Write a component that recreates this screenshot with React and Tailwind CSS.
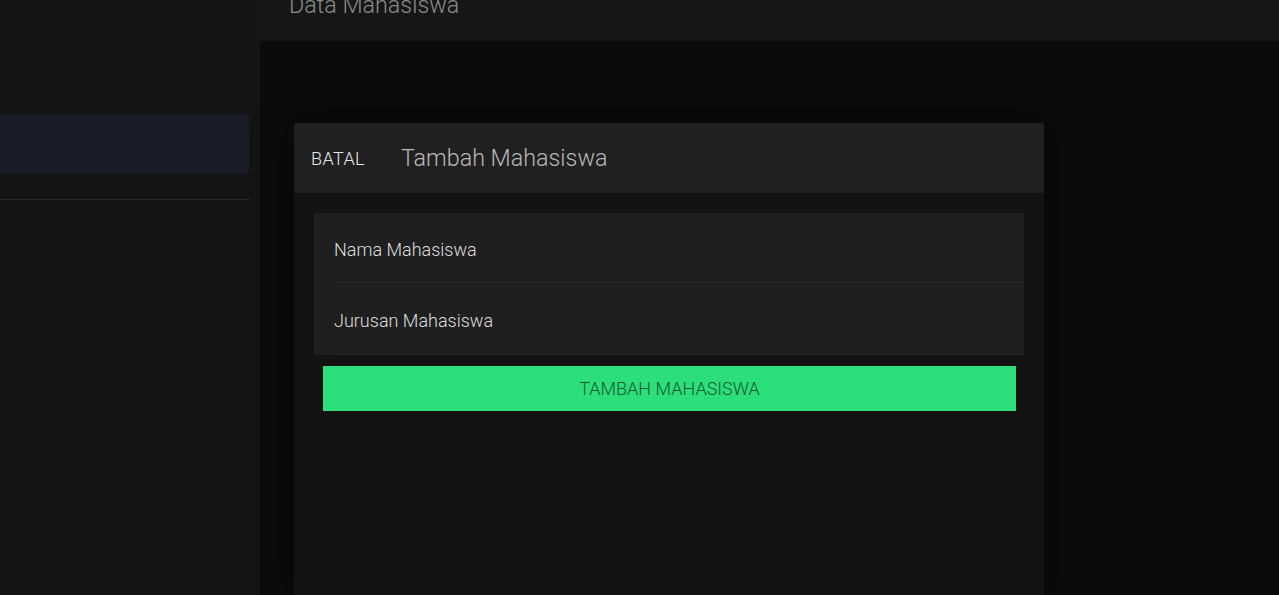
export default function App() {
  return (
    <div className="flex h-[595px] w-[1279px] overflow-hidden bg-[#0b0b0b] font-['Helvetica_Neue',Roboto,'Liberation_Sans',sans-serif] font-light">
      <aside className="w-[260px] shrink-0 bg-[#141414] pr-[11px] pt-[114px]">
        <div className="h-[60px] rounded-r-[4px] bg-[#181d27]" />
        <div className="mt-[25px] h-px bg-[#262626]" />
      </aside>

      <main className="flex flex-1 flex-col">
        <header className="h-[41px] shrink-0 overflow-hidden bg-[#161616] pl-[29px]">
          <h1 className="-mt-[6px] text-[23.3px] leading-none font-light text-[#8a8a8a]">Data Mahasiswa</h1>
        </header>

        <div className="flex-1 pl-[34px] pt-[82px]">
          <div className="h-full w-[750px] rounded-t-[3px] bg-[#121212] shadow-[0_0_40px_rgba(0,0,0,0.45)]">
            <div className="flex h-[70px] items-center gap-[36px] rounded-t-[3px] bg-[#202020] px-[17px]">
              <button className="text-[18px] tracking-[0.4px] font-light text-[#e8e8e8]">BATAL</button>
              <h2 className="text-[23.3px] font-light text-[#b8b8b8]">Tambah Mahasiswa</h2>
            </div>

            <div className="px-[20px] pt-[20px]">
              <div className="bg-[#1f1f1f]">
                <div className="pl-[20px]">
                  <input
                    placeholder="Nama Mahasiswa"
                    className="h-[70px] w-full border-b border-[#262626] bg-transparent pt-[4px] text-[18px] font-light text-[#dedede] outline-none placeholder:text-[#dedede]"
                  />
                </div>
                <div className="pl-[20px]">
                  <input
                    placeholder="Jurusan Mahasiswa"
                    className="h-[72px] w-full border-b border-[#262626] bg-transparent pt-[4px] text-[18px] font-light text-[#dedede] outline-none placeholder:text-[#dedede]"
                  />
                </div>
              </div>
              <div className="pl-[9px] pr-[8px] pt-[11px]">
                <button className="h-[45px] w-full bg-[#2ddf7b] text-[18px] font-light text-[#13582f]">
                  TAMBAH MAHASISWA
                </button>
              </div>
            </div>
          </div>
        </div>
      </main>
    </div>
  )
}
